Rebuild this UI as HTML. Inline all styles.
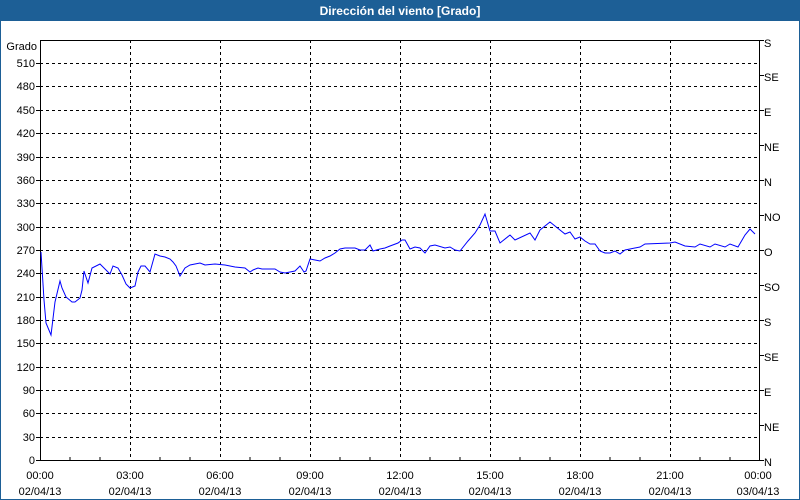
<!DOCTYPE html>
<html><head><meta charset="utf-8"><style>
html,body{margin:0;padding:0;width:800px;height:500px;overflow:hidden;background:#fff;font-family:"Liberation Sans",sans-serif;}
</style></head><body>
<svg width="800" height="500" xmlns="http://www.w3.org/2000/svg" style="position:absolute;left:0;top:0" font-family="Liberation Sans, sans-serif" font-size="11">
<rect x="0" y="0" width="800" height="500" fill="#fff"/>
<rect x="0.5" y="0.5" width="799" height="499" fill="none" stroke="#1d5f96"/>
<rect x="0" y="0" width="800" height="21" fill="#1d5f96"/>
<text x="400" y="15" fill="#fff" font-weight="bold" font-size="12" text-anchor="middle">Dirección del viento [Grado]</text>
<g stroke="#000" stroke-dasharray="3,3" stroke-width="1">
<line x1="40" y1="63.5" x2="760" y2="63.5"/><line x1="40" y1="86.5" x2="760" y2="86.5"/><line x1="40" y1="110.5" x2="760" y2="110.5"/><line x1="40" y1="133.5" x2="760" y2="133.5"/><line x1="40" y1="157.5" x2="760" y2="157.5"/><line x1="40" y1="180.5" x2="760" y2="180.5"/><line x1="40" y1="203.5" x2="760" y2="203.5"/><line x1="40" y1="227.5" x2="760" y2="227.5"/><line x1="40" y1="250.5" x2="760" y2="250.5"/><line x1="40" y1="273.5" x2="760" y2="273.5"/><line x1="40" y1="297.5" x2="760" y2="297.5"/><line x1="40" y1="320.5" x2="760" y2="320.5"/><line x1="40" y1="343.5" x2="760" y2="343.5"/><line x1="40" y1="367.5" x2="760" y2="367.5"/><line x1="40" y1="390.5" x2="760" y2="390.5"/><line x1="40" y1="413.5" x2="760" y2="413.5"/><line x1="40" y1="437.5" x2="760" y2="437.5"/>
<line x1="130.5" y1="40" x2="130.5" y2="460"/><line x1="220.5" y1="40" x2="220.5" y2="460"/><line x1="310.5" y1="40" x2="310.5" y2="460"/><line x1="400.5" y1="40" x2="400.5" y2="460"/><line x1="490.5" y1="40" x2="490.5" y2="460"/><line x1="580.5" y1="40" x2="580.5" y2="460"/><line x1="670.5" y1="40" x2="670.5" y2="460"/>
</g>
<g stroke="#000" stroke-width="1">
<line x1="40.5" y1="40" x2="40.5" y2="461"/><line x1="759.5" y1="40" x2="759.5" y2="461"/><line x1="40" y1="460.5" x2="760" y2="460.5"/>
<line x1="40" y1="40.5" x2="760" y2="40.5"/>
<path d="M70 460v-3M100 460v-3M160 460v-3M190 460v-3M250 460v-3M280 460v-3M340 460v-3M370 460v-3M430 460v-3M460 460v-3M520 460v-3M550 460v-3M610 460v-3M640 460v-3M700 460v-3M730 460v-3"/>
<path d="M36 63.5h4M36 86.5h4M36 110.5h4M36 133.5h4M36 157.5h4M36 180.5h4M36 203.5h4M36 227.5h4M36 250.5h4M36 273.5h4M36 297.5h4M36 320.5h4M36 343.5h4M36 367.5h4M36 390.5h4M36 413.5h4M36 437.5h4M36 460.5h4"/>
<path d="M760 40.5h4M760 75.5h4M760 110.5h4M760 145.5h4M760 180.5h4M760 215.5h4M760 250.5h4M760 285.5h4M760 320.5h4M760 355.5h4M760 390.5h4M760 425.5h4M760 460.5h4"/>
</g>
<g fill="#000" text-anchor="end">
<text x="37" y="50">Grado</text>
<text x="35" y="67">510</text><text x="35" y="90">480</text><text x="35" y="114">450</text><text x="35" y="137">420</text><text x="35" y="161">390</text><text x="35" y="184">360</text><text x="35" y="207">330</text><text x="35" y="231">300</text><text x="35" y="254">270</text><text x="35" y="277">240</text><text x="35" y="301">210</text><text x="35" y="324">180</text><text x="35" y="347">150</text><text x="35" y="371">120</text><text x="35" y="394">90</text><text x="35" y="417">60</text><text x="35" y="441">30</text><text x="35" y="464">0</text>
</g>
<g fill="#000">
<text x="764" y="47">S</text><text x="764" y="81">SE</text><text x="764" y="116">E</text><text x="764" y="151">NE</text><text x="764" y="186">N</text><text x="764" y="221">NO</text><text x="764" y="256">O</text><text x="764" y="291">SO</text><text x="764" y="326">S</text><text x="764" y="361">SE</text><text x="764" y="396">E</text><text x="764" y="431">NE</text><text x="764" y="466">N</text>
</g>
<g fill="#000" text-anchor="middle">
<text x="40" y="479">00:00</text><text x="40" y="495">02/04/13</text>
<text x="130" y="479">03:00</text><text x="130" y="495">02/04/13</text>
<text x="220" y="479">06:00</text><text x="220" y="495">02/04/13</text>
<text x="310" y="479">09:00</text><text x="310" y="495">02/04/13</text>
<text x="400" y="479">12:00</text><text x="400" y="495">02/04/13</text>
<text x="490" y="479">15:00</text><text x="490" y="495">02/04/13</text>
<text x="580" y="479">18:00</text><text x="580" y="495">02/04/13</text>
<text x="670" y="479">21:00</text><text x="670" y="495">02/04/13</text>
<text x="758" y="479">00:00</text><text x="758" y="495">03/04/13</text>
</g>
<polyline fill="none" stroke="#0000ff" stroke-width="1" points="41,252 42,268 44,300 46,323 51,335 55,302 60,281 62,288 66,297 72,302 75,302 80,298 82,290 84,271 88,283 92,268 100,264 104,268 110,274 113,266 118,268 122,275 126,284 130,288 135,286 138,272 141,266 145,266 150,272 155,254 160,256 165,257 170,259 173,262 176,266 180,276 185,268 190,265 200,263 205,265 215,264 225,265 235,267 245,268 250,272 253,270 258,268 262,269 275,269 280,272 285,273 290,272 295,271 300,266 304,272 306,271 310,259 320,261 325,258 330,256 335,253 340,249 345,248 355,248 360,250 365,250 370,245 373,251 380,249 385,248 390,246 398,243 402,240 405,240 410,249 415,247 420,248 425,253 430,246 435,245 445,248 450,247 455,250 460,251 468,241 475,233 480,225 485,214 490,231 495,231 500,243 510,235 515,240 530,233 535,240 540,230 550,222 555,226 565,234 570,232 575,239 580,237 585,241 590,244 595,244 600,251 605,253 610,253 615,251 620,254 625,250 630,249 640,247 645,244 670,243 675,242 685,246 695,247 700,244 710,247 715,244 725,247 730,244 738,247 745,235 750,229 755,234"/>
</svg>
</body></html>
